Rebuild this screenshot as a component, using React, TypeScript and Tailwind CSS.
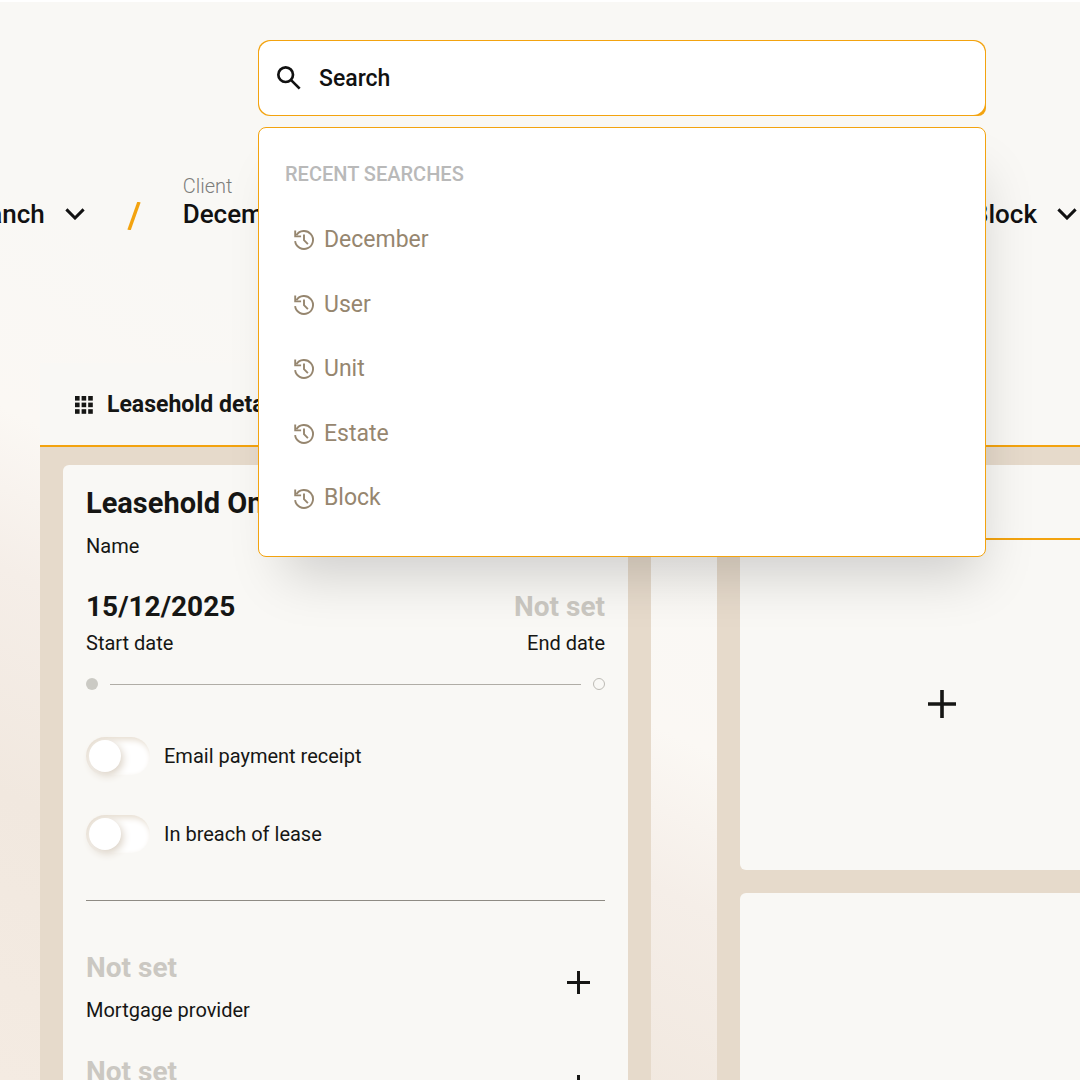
import { useState } from 'react';

type IconProps = {
  className?: string;
};

type Field = {
  id: string;
  label?: string;
};

const recentSearches = ['December', 'User', 'Unit', 'Estate', 'Block'];

const emptyFields: Field[] = [{ id: 'mortgage-provider', label: 'Mortgage provider' }, { id: 'next-field' }];

function SearchIcon({ className }: IconProps) {
  return (
    <svg viewBox="0 0 24 24" className={className} fill="none" stroke="currentColor" strokeWidth="2" aria-hidden="true">
      <circle cx="9.5" cy="9.5" r="5.5" />
      <path d="M13.6 13.6 20 20" />
    </svg>
  );
}

function HistoryIcon({ className }: IconProps) {
  return (
    <svg viewBox="0 0 24 24" className={className} fill="none" stroke="currentColor" strokeWidth="1.9" aria-hidden="true">
      <path d="M3.1 13.2A9 9 0 1 0 4.4 7.2" />
      <path d="M3.2 2.6v5.8h5.9" />
      <path d="M12 6.6v5.6l3.9 3.9" />
    </svg>
  );
}

function ChevronIcon({ className }: IconProps) {
  return (
    <svg viewBox="0 0 20 12" className={className} fill="none" stroke="currentColor" strokeWidth="3" aria-hidden="true">
      <path d="M1.4 1.4 10 10 18.6 1.4" />
    </svg>
  );
}

function PlusIcon({ className }: IconProps) {
  return (
    <svg viewBox="0 0 24 24" className={className} fill="none" stroke="currentColor" strokeWidth="3.1" aria-hidden="true">
      <path d="M12 0v24M0 12h24" />
    </svg>
  );
}

function GridIcon({ className }: IconProps) {
  return (
    <svg viewBox="0 0 18 18" className={className} fill="currentColor" aria-hidden="true">
      {[0, 6.6, 13.2].map((y) => [0, 6.6, 13.2].map((x) => <rect key={`${x}-${y}`} x={x} y={y} width="4.6" height="4.6" />))}
    </svg>
  );
}

function Crumb({ label, value }: { label?: string; value: string }) {
  return (
    <div className="shrink-0">
      {label ? <div className="text-[20px] font-light leading-6 text-[#7d7d7b]">{label}</div> : null}
      <button type="button" className="flex items-center gap-5 text-[26px] font-medium leading-8 text-[#111]">
        {value}
        <ChevronIcon className="h-3 w-5" />
      </button>
    </div>
  );
}

function Toggle({ id, label }: { id: string; label: string }) {
  const [on, setOn] = useState(false);

  return (
    <div className="flex items-center gap-[14px]">
      <input
        id={id}
        type="checkbox"
        role="switch"
        checked={on}
        onChange={(e) => setOn(e.target.checked)}
        className="h-[38px] w-16 shrink-0 cursor-pointer appearance-none rounded-full bg-white p-[3px] shadow-[inset_2px_3px_6px_#e6ddd0] before:block before:size-8 before:rounded-full before:bg-white before:shadow-[2px_3px_8px_#d9cfc2] before:transition checked:before:translate-x-[26px]"
      />
      <label htmlFor={id} className="text-[20px] leading-7">
        {label}
      </label>
    </div>
  );
}

function SearchBox() {
  const [query, setQuery] = useState('');

  return (
    <div className="relative z-10 ml-[258px] mr-[94px]">
      <div className="rounded-xl rounded-br-lg bg-[#f3a30f] p-px">
        <div className="flex h-[74px] items-center gap-[14px] rounded-xl bg-white pl-[14px] pr-4">
          <SearchIcon className="size-8 shrink-0 text-[#111]" />
          <input
            type="text"
            value={query}
            onChange={(e) => setQuery(e.target.value)}
            placeholder="Search"
            aria-label="Search"
            className="min-w-0 flex-1 bg-transparent pt-0.5 text-[23px] font-medium text-[#111] outline-none placeholder:text-[#111]"
          />
        </div>
      </div>

      <div className="absolute inset-x-0 top-full mt-[11px] rounded-lg border border-[#f3a30f] bg-white px-[26px] pb-[25px] pt-8 shadow-[10px_34px_50px_-16px_rgba(0,0,0,0.17)]">
        <h2 className="text-[20px] font-medium leading-7 text-[#b9b9b9]">RECENT SEARCHES</h2>
        <ul className="mt-5 grid h-[323px] grid-rows-5">
          {recentSearches.map((term) => (
            <li key={term} className="flex">
              <button
                type="button"
                onClick={() => setQuery(term)}
                className="flex w-full items-center gap-2 pl-[7px] text-left text-[23px] text-[#96866f]"
              >
                <HistoryIcon className="size-6 shrink-0" />
                {term}
              </button>
            </li>
          ))}
        </ul>
      </div>
    </div>
  );
}

function LeaseholdCard() {
  return (
    <div className="flex-1 rounded-t-md bg-[#f9f8f5] px-[23px] pt-[22px]">
      <div className="text-[29px] font-bold leading-8">Leasehold One</div>
      <div className="mt-[13px] text-[20px] leading-7">Name</div>

      <div className="mt-[31px] flex justify-between">
        <div>
          <div className="text-[28px] font-bold leading-8">15/12/2025</div>
          <div className="mt-1.5 text-[20px] leading-7">Start date</div>
        </div>
        <div className="text-right">
          <div className="text-[28px] font-bold leading-8 text-[#cbc8c2]">Not set</div>
          <div className="mt-1.5 text-[20px] leading-7">End date</div>
        </div>
      </div>

      <div className="mt-[21px] flex items-center gap-3">
        <span className="size-3 rounded-full bg-[#cbcac4]" />
        <span className="h-px flex-1 bg-[#b0ada6]" />
        <span className="size-3 rounded-full border border-[#bdbbb5]" />
      </div>

      <div className="mt-[47px] space-y-10">
        <Toggle id="email-receipt" label="Email payment receipt" />
        <Toggle id="breach" label="In breach of lease" />
      </div>

      <hr className="mt-[47px] border-[#8f8b84]" />

      <div className="mt-[51px] space-y-8">
        {emptyFields.map((field) => (
          <div key={field.id} className="flex items-start justify-between">
            <div>
              <div className="text-[28px] font-bold leading-8 text-[#cbc8c2]">Not set</div>
              {field.label ? <div className="mt-3 text-[20px] leading-7">{field.label}</div> : null}
            </div>
            <button type="button" aria-label="Add" className="flex h-[60px] w-[54px] items-center justify-center">
              <PlusIcon className="size-[23px]" />
            </button>
          </div>
        ))}
      </div>
    </div>
  );
}

export default function App() {
  return (
    <div className="flex h-screen flex-col overflow-hidden border-t-2 border-white bg-[linear-gradient(206deg,#f9f8f5_44%,#fbf8f4_58%,#f5eee8_68%,#f1e8df_82%,#f4ebe2_100%)] pt-[38px] font-[Roboto,sans-serif] text-[#161614]">
      <SearchBox />

      <nav className="mt-[58px] flex items-end gap-[42px] pr-[3px]">
        <div className="-ml-[37px]">
          <Crumb value="Branch" />
        </div>
        <svg viewBox="0 0 14 28" className="h-7 w-[14px]" fill="none" stroke="#f3a30f" strokeWidth="3.4" aria-hidden="true">
          <path d="M2 28 12 0" />
        </svg>
        <Crumb label="Client" value="December" />
        <div className="ml-auto">
          <Crumb value="Block" />
        </div>
      </nav>

      <main className="-mr-[87px] mt-[133px] flex flex-1 gap-[66px] pl-10">
        <section className="flex flex-1 flex-col">
          <h1 className="flex h-[84px] shrink-0 items-center gap-[14px] border-b-2 border-[#f3a30f] bg-[#f9f8f5] pl-[35px] pt-0.5 text-[23px] font-bold">
            <GridIcon className="size-[18px]" />
            Leasehold details
          </h1>
          <div className="flex flex-1 bg-[#e6dacb] px-[23px] pt-[18px]">
            <LeaseholdCard />
          </div>
        </section>

        <section className="flex w-[450px] shrink-0 flex-col">
          <div className="h-[84px] shrink-0 border-b-2 border-[#f3a30f] bg-[#f9f8f5]" />
          <div className="flex flex-1 flex-col gap-[23px] bg-[#e6dacb] px-[23px] pt-[18px]">
            <div className="overflow-hidden rounded-md bg-[#f9f8f5]">
              <div className="h-[75px] border-b-2 border-[#f3a30f]" />
              <button type="button" aria-label="Add item" className="flex h-[330px] w-full items-center justify-center pb-0.5">
                <PlusIcon className="size-7" />
              </button>
            </div>
            <div className="flex-1 rounded-t-md bg-[#f9f8f5]" />
          </div>
        </section>
      </main>
    </div>
  );
}
